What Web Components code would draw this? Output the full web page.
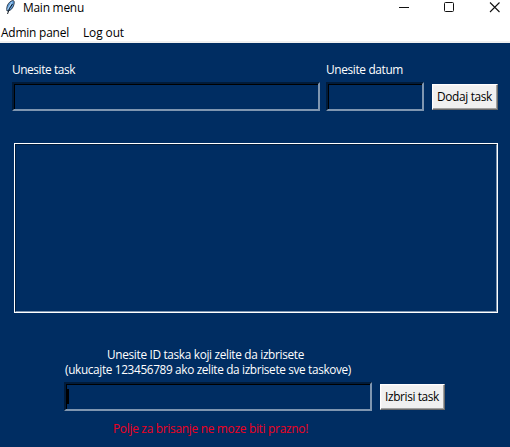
<!DOCTYPE html>
<html lang="sr">
<head>
<meta charset="utf-8">
<title>Main menu</title>
<style>
html,body{margin:0;height:100%;overflow:hidden}
body{font:11.9px/15px "Open Sans","Noto Sans",sans-serif;color:#000}
</style>
</head>
<body>
<task-window></task-window>
<script>
const define = (name, html, setup) => customElements.define(name, class extends HTMLElement {
  connectedCallback() {
    if (this.shadowRoot) return;
    const t = document.createElement('template');
    t.innerHTML = html;
    this.attachShadow({mode: 'open'}).append(t.content.cloneNode(true));
    if (setup) setup(this);
  }
});

// Text run whose tracking is adjusted to the width attribute.
define('ui-text', `<style>:host{display:block;white-space:nowrap}span{display:inline-block}</style><span><slot></slot></span>`, el => {
  const w = parseFloat(el.getAttribute('width'));
  const s = el.shadowRoot.querySelector('span');
  el.style.width = w + 'px';
  s.style.letterSpacing = ((w - s.getBoundingClientRect().width) / el.textContent.length) + 'px';
});

define('tk-button', `<style>
:host{display:flex;box-sizing:border-box;height:26px;align-items:center;padding-left:4px;background:#f0f0f0;
border:1px solid;border-color:#fff #696969 #696969 #fff;box-shadow:inset -1px -1px #a0a0a0,inset 1px 1px #f7f3f3;color:#000}
</style><slot></slot>`);

define('tk-entry', `<style>
:host{display:flex;box-sizing:border-box;height:29px;border:2px solid;border-color:#001b3a #7f96b0 #7f96b0 #001b3a}
div{flex:1;border-top:1px solid #000;border-left:1px solid #000}
i{display:none;width:3px;height:15px;background:#000;margin-top:4px;margin-left:-1px}
:host([focused]) i{display:block}
</style><div><i></i></div>`);

define('tk-listbox', `<style>
:host{display:flex;box-sizing:border-box;border:1px solid #fff}
div{flex:1;border:1px solid;border-color:#001b3a #7f96b0 #7f96b0 #001b3a}
</style><div></div>`);

define('title-bar', `<style>
:host{display:flex;height:23px;background:#fff;align-items:flex-start}
.feather{margin:0 7px 0 4px;flex:none}
.title{flex:1}
.controls{flex:none}
</style>
<svg class="feather" width="12" height="15" viewBox="0 0 12 15">
<path d="M3 11C2 7 4 2 8.500.5C11 0 10.500 4 9 7C7.500 10 5 11 3 11Z" fill="#5f9bd6" stroke="#16202c" stroke-width=".8"/>
<path d="M8 2L3.500 9.500" stroke="#b9dcfa" stroke-width="1"/>
<path d="M8.500 4Q5 8 3.500 14" fill="none" stroke="#101820" stroke-width="1"/></svg>
<ui-text class="title" width="61">Main menu</ui-text>
<svg class="controls" width="112" height="16" viewBox="0 0 112 16" fill="none" stroke="#111">
<path d="M1 7.500H11"/><rect x="46.500" y="2.500" width="9" height="9" rx="1"/><path d="M92 2.500L101.500 12M101.500 2.500L92 12" stroke-width="1.100"/></svg>`);

define('menu-bar', `<style>
:host{display:flex;box-sizing:border-box;height:20px;gap:14px;padding:2px 1px 0;background:#fff;border-bottom:2px solid #f0f0f0}
</style><slot></slot>`);

define('task-window', `<style>
:host{display:flex;flex-direction:column;height:447px;background:#002d62}
main{flex:1;color:#fff}
.add{display:grid;grid-template-columns:308px 98px 66px;column-gap:6px;padding:19px 12px 0;row-gap:5px;align-items:center}
.add tk-button{grid-column:3;margin-left:2px;width:66px}
.add ui-text,.remove ui-text{height:15px}
tk-listbox{height:170px;margin:32px 12px 0 14px}
.hint{display:flex;flex-direction:column;width:286px;margin:34px 0 0 65px;font-size:11.8px}
.lead{margin-left:42px}
.remove{display:grid;grid-template-columns:308px 65px;gap:8px;padding:5px 0 0 64px;align-items:center}
.error{color:#f00020;margin:10px 0 0 113px}
</style>
<title-bar></title-bar>
<menu-bar><ui-text width="68">Admin panel</ui-text><ui-text width="41">Log out</ui-text></menu-bar>
<main>
<section class="add">
<ui-text width="63">Unesite task</ui-text><ui-text width="77">Unesite datum</ui-text><span></span>
<tk-entry></tk-entry><tk-entry></tk-entry><tk-button><ui-text width="55">Dodaj task</ui-text></tk-button>
</section>
<tk-listbox></tk-listbox>
<div class="hint"><ui-text class="lead" width="197">Unesite ID taska koji zelite da izbrisete</ui-text><ui-text width="286">(ukucajte 123456789 ako zelite da izbrisete sve taskove)</ui-text></div>
<section class="remove"><tk-entry focused></tk-entry><tk-button><ui-text width="54">Izbrisi task</ui-text></tk-button></section>
<ui-text class="error" width="195">Polje za brisanje ne moze biti prazno!</ui-text>
</main>`);
</script>
</body>
</html>
